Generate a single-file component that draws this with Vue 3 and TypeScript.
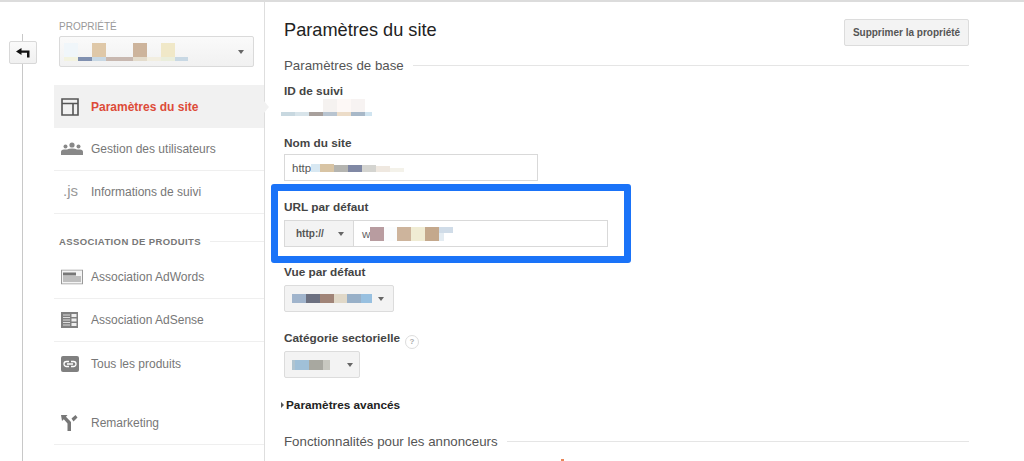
<script setup lang="ts">
type Block = [number, number, number, number, string]

const propertyBlocks: Block[] = [
  [0, 0, 14, 14, '#f0f6fa'], [0, 14, 14, 4, '#f3f3e0'], [14, 14, 14, 4, '#8090b0'],
  [28, 0, 14, 14, '#dfc8a8'], [28, 14, 14, 4, '#c8d8e4'], [42, 14, 27, 4, '#c8b8b0'],
  [69, 0, 14, 14, '#cdb49c'], [69, 14, 14, 4, '#e4dccc'], [83, 14, 14, 4, '#f2eee0'],
  [97, 0, 14, 14, '#f0e8c8'], [97, 14, 14, 4, '#eaeedc'], [111, 14, 13, 4, '#c8d8e4'],
]
const trackingBlocks: Block[] = [
  [42, 0, 14, 13, '#f5f2f0'], [56, 0, 14, 13, '#fdf8f6'], [70, 0, 14, 13, '#f7f3f2'],
  [0, 13, 14, 4, '#c8d8e0'], [14, 13, 14, 4, '#d8e4ea'], [28, 13, 14, 4, '#a8a09c'],
  [42, 13, 14, 4, '#b8c4d0'], [56, 13, 14, 4, '#ecdcc8'], [70, 13, 14, 4, '#a8b8c8'],
  [84, 13, 7, 4, '#d0e4f0'],
]
const nameBlocks: Block[] = [
  [0, 1, 9, 8, '#d8e8f2'], [9, 1, 14, 8, '#d8c4a4'], [23, 2, 14, 7, '#b4b4b0'],
  [37, 2, 14, 7, '#8088a4'], [51, 2, 14, 7, '#d4d4d0'], [65, 3, 14, 6, '#efe8e0'],
  [79, 5, 14, 4, '#f4f2ea'],
]
const urlBlocks: Block[] = [
  [0, 0, 14, 14, '#b89ca0'], [14, 0, 13, 14, '#fafcfd'], [27, 0, 14, 14, '#cdb49c'],
  [41, 0, 14, 14, '#f0ecd4'], [55, 0, 14, 14, '#c4a88c'], [69, 0, 14, 6, '#d0dce8'],
  [69, 6, 5, 8, '#e4ecf2'],
]
const viewBlocks: Block[] = [
  [0, 0, 14, 9, '#a0b4cc'], [14, 0, 14, 9, '#6c7080'], [28, 0, 14, 9, '#a08478'],
  [42, 0, 13, 9, '#e0d8c8'], [55, 0, 14, 9, '#98b0c8'], [69, 0, 11, 9, '#98c0e0'],
]
const categoryBlocks: Block[] = [
  [0, 0, 3, 10, '#b0c4d0'], [3, 0, 14, 10, '#a0c0d8'], [17, 0, 14, 10, '#a8a8a0'], [31, 0, 7, 10, '#c8c8c0'],
]
</script>

<template>
  <div class="page">
    <div class="rail">
      <button class="back" type="button" aria-label="Retour">
        <svg width="14" height="10" viewBox="0 0 14 10"><path d="M5.500 0 L0 3.500 L5.500 7 V4.700 H11 V9.500 H13.500 V2.500 H5.500 Z" fill="#111" /></svg>
      </button>
    </div>

    <aside class="sidebar">
      <div class="side-head">
        <div class="side-label">PROPRIÉTÉ</div>
        <div class="prop-select">
          <svg class="mosaic" width="124" height="18" viewBox="0 0 124 18">
            <rect v-for="(b, i) in propertyBlocks" :key="i" :x="b[0]" :y="b[1]" :width="b[2]" :height="b[3]" :fill="b[4]" />
          </svg>
          <span class="caret"></span>
        </div>
      </div>

      <nav class="nav-group">
        <a class="nav-item active">
          <svg class="nav-icon" width="18" height="18" viewBox="0 0 18 18"><path d="M1 1H17V17H1Z M1 5.500H17 M12 5.500V17" fill="none" stroke="#555" stroke-width="1.600" /></svg>
          <span>Paramètres du site</span>
        </a>
        <a class="nav-item">
          <svg class="nav-icon" width="22" height="14" viewBox="0 0 22 14"><circle cx="4.500" cy="4.500" r="2" fill="#888" /><circle cx="11" cy="3" r="2.600" fill="#888" /><circle cx="17.500" cy="4.500" r="2" fill="#888" /><path d="M0 13V10Q0 7.500 3 7.500H6Q7.500 6.500 11 6.500T16 7.500H19Q22 7.500 22 10V13Z" fill="#888" /></svg>
          <span>Gestion des utilisateurs</span>
        </a>
        <a class="nav-item">
          <span class="js-icon">.js</span>
          <span>Informations de suivi</span>
        </a>
      </nav>

      <div class="side-section">
        <span>ASSOCIATION DE PRODUITS</span>
        <i></i>
      </div>

      <nav class="nav-group">
        <a class="nav-item">
          <svg class="nav-icon" width="22" height="15" viewBox="0 0 22 15"><rect x="0.500" y="0.500" width="21" height="14" fill="#f4f4f4" stroke="#999" /><rect x="2" y="3" width="13" height="3" fill="#777" /><path d="M2 7.500H20M2 9.500H20M2 11.500H20" stroke="#888" /></svg>
          <span>Association AdWords</span>
        </a>
        <a class="nav-item">
          <svg class="nav-icon" width="17" height="16" viewBox="0 0 17 16"><rect width="17" height="16" fill="#808080" /><path d="M2 3H9M2 5.500H9M2 8H9M2 10.500H9M2 13H9" stroke="#ddd" /><rect x="10.500" y="2" width="5" height="3" fill="#eee" /><rect x="10.500" y="6.500" width="5" height="3" fill="#eee" /><rect x="10.500" y="11" width="5" height="3" fill="#eee" /></svg>
          <span>Association AdSense</span>
        </a>
        <a class="nav-item plain">
          <svg class="nav-icon" width="18" height="16" viewBox="0 0 18 16"><rect width="18" height="16" rx="2" fill="#808080" /><path d="M8 5.500H5.500A2.500 2.500 0 0 0 5.500 10.500H8M10 5.500H12.500A2.500 2.500 0 0 1 12.500 10.500H10M6 8H12" fill="none" stroke="#fff" stroke-width="1.300" /></svg>
          <span>Tous les produits</span>
        </a>
      </nav>

      <nav class="nav-group remarketing">
        <a class="nav-item">
          <svg class="nav-icon" width="17" height="16" viewBox="0 0 17 16"><path d="M0 0H6.500L5 1.800L10 7V16H6.500V8.500L2.800 4.200L1 6Z M16.500 2.500L14.500 0L10.500 3.500L12.500 6.500Z" fill="#777" /></svg>
          <span>Remarketing</span>
        </a>
      </nav>
    </aside>

    <main class="main">
      <header class="title-row">
        <h1>Paramètres du site</h1>
        <button class="delete" type="button">Supprimer la propriété</button>
      </header>

      <div class="section-head">
        <span>Paramètres de base</span>
        <i></i>
      </div>

      <div class="field tracking">
        <label>ID de suivi</label>
        <svg class="tracking-value" width="91" height="17" viewBox="0 0 91 17">
          <rect v-for="(b, i) in trackingBlocks" :key="i" :x="b[0]" :y="b[1]" :width="b[2]" :height="b[3]" :fill="b[4]" />
        </svg>
      </div>

      <div class="field name">
        <label>Nom du site</label>
        <div class="text-input">
          <span>http</span>
          <svg width="93" height="10" viewBox="0 0 93 10">
            <rect v-for="(b, i) in nameBlocks" :key="i" :x="b[0]" :y="b[1]" :width="b[2]" :height="b[3]" :fill="b[4]" />
          </svg>
        </div>
      </div>

      <div class="highlight">
        <label>URL par défaut</label>
        <div class="url-input">
          <div class="scheme"><span>http://</span><span class="caret"></span></div>
          <div class="url-value">
            <span>w</span>
            <svg width="83" height="14" viewBox="0 0 83 14">
              <rect v-for="(b, i) in urlBlocks" :key="i" :x="b[0]" :y="b[1]" :width="b[2]" :height="b[3]" :fill="b[4]" />
            </svg>
          </div>
        </div>
      </div>

      <div class="field view">
        <label>Vue par défaut</label>
        <div class="select view-select">
          <svg width="80" height="9" viewBox="0 0 80 9">
            <rect v-for="(b, i) in viewBlocks" :key="i" :x="b[0]" :y="b[1]" :width="b[2]" :height="b[3]" :fill="b[4]" />
          </svg>
          <span class="caret"></span>
        </div>
      </div>

      <div class="field category">
        <label>Catégorie sectorielle<span class="help">?</span></label>
        <div class="select category-select">
          <svg width="38" height="10" viewBox="0 0 38 10">
            <rect v-for="(b, i) in categoryBlocks" :key="i" :x="b[0]" :y="b[1]" :width="b[2]" :height="b[3]" :fill="b[4]" />
          </svg>
          <span class="caret"></span>
        </div>
      </div>

      <div class="advanced"><span class="tri"></span>Paramètres avancés</div>

      <div class="section-head ads">
        <span>Fonctionnalités pour les annonceurs</span>
        <i></i>
      </div>
      <span class="red-mark"></span>
    </main>
  </div>
</template>

<style>
html, body { margin: 0; background: #fff; overflow: hidden; }
</style>

<style scoped>
.page {
  display: grid;
  grid-template-columns: 54px 211px 1fr;
  height: 461px;
  box-sizing: border-box;
  border-top: 2px solid #dcdcdc;
  font-family: "Liberation Sans", Arial, sans-serif;
  overflow: hidden;
}
.rail { position: relative; padding: 39px 0 0 9px; }
.rail::before {
  content: "";
  position: absolute;
  left: 22px;
  top: 32px;
  bottom: 0;
  width: 1px;
  background: #c8c8c8;
}
.back {
  position: relative;
  display: flex;
  align-items: center;
  justify-content: center;
  width: 28px;
  height: 23px;
  padding: 0;
  background: linear-gradient(#fafafa, #f0f0f0);
  border: 1px solid #d8d8d8;
  border-radius: 2px;
}
.sidebar { border-right: 1px solid #dedede; }
.side-head { padding: 19px 10px 0 5px; height: 83px; box-sizing: border-box; }
.side-label { font-size: 10px; color: #999; line-height: 12px; margin-bottom: 3px; }
.prop-select {
  display: flex;
  align-items: center;
  justify-content: space-between;
  height: 31px;
  box-sizing: border-box;
  padding: 0 9px 0 4px;
  background: linear-gradient(#fafafa, #f1f1f1);
  border: 1px solid #dadada;
  border-radius: 2px;
}
.caret {
  display: block;
  width: 0;
  height: 0;
  border-left: 3.500px solid transparent;
  border-right: 3.500px solid transparent;
  border-top: 4px solid #666;
}
.nav-group { display: flex; flex-direction: column; }
.nav-item {
  position: relative;
  display: flex;
  align-items: center;
  height: 43px;
  box-sizing: border-box;
  padding-left: 37px;
  font-size: 12px;
  color: #777;
  border-bottom: 1px solid #efefef;
}
.nav-item.plain { border-bottom: none; }
.nav-item.active {
  background: #f1f1f1;
  color: #dd4b39;
  font-weight: bold;
  border-bottom: none;
}
.nav-item.active::after {
  content: "";
  position: absolute;
  right: -5px;
  top: 16px;
  width: 0;
  height: 0;
  border-top: 6px solid transparent;
  border-bottom: 6px solid transparent;
  border-left: 5px solid #f1f1f1;
}
.nav-icon { position: absolute; left: 7px; top: 50%; transform: translateY(-50%); }
.js-icon { position: absolute; left: 9px; top: 10px; font-size: 15px; color: #999; line-height: 20px; }
.side-section {
  display: flex;
  align-items: center;
  gap: 9px;
  height: 42px;
  box-sizing: border-box;
  padding: 13px 0 1px 5px;
  font-size: 9.500px;
  font-weight: bold;
  color: #777;
  letter-spacing: 0.400px;
  white-space: nowrap;
}
.side-section i { flex: 1; height: 1px; background: #eee; }
.remarketing { margin-top: 17px; }

.main { position: relative; padding: 0 55px 0 19px; }
.title-row { display: flex; justify-content: space-between; height: 48px; }
h1 { margin: 17px 0 0; font-size: 18.200px; font-weight: normal; color: #222; line-height: 22px; }
.delete {
  margin-top: 17px;
  width: 125px;
  height: 27px;
  padding: 0;
  font: bold 10px "Liberation Sans", Arial, sans-serif;
  color: #555;
  background: #f3f3f3;
  border: 1px solid #dcdcdc;
  border-radius: 2px;
}
.section-head {
  display: flex;
  align-items: center;
  gap: 9px;
  height: 30px;
  font-size: 13.300px;
  color: #555;
  white-space: nowrap;
}
.section-head i { flex: 1; height: 1px; background: #e5e5e5; }
label { display: block; font-size: 11.800px; font-weight: bold; color: #444; line-height: 14px; }
.tracking { margin-top: 4px; height: 52px; }
.tracking label { margin-bottom: 1px; }
.tracking-value { display: block; margin-left: -3px; }
.name label { margin-bottom: 4px; }
.text-input {
  display: flex;
  align-items: center;
  width: 254px;
  height: 27px;
  box-sizing: border-box;
  padding-left: 7px;
  border: 1px solid #d9d9d9;
  font-size: 11.500px;
  color: #555;
}
.highlight {
  width: 360px;
  height: 79px;
  box-sizing: border-box;
  margin: 3px 0 0 -13px;
  padding: 9px 0 0 6px;
  border: 7px solid #1a73f8;
  border-radius: 3px;
}
.highlight label { margin-bottom: 6px; }
.url-input {
  display: flex;
  width: 324px;
  height: 27px;
  box-sizing: border-box;
  border: 1px solid #d9d9d9;
}
.scheme {
  display: flex;
  align-items: center;
  justify-content: space-between;
  width: 69px;
  box-sizing: border-box;
  padding: 0 9px 0 11px;
  background: #f3f3f3;
  border-right: 1px solid #d9d9d9;
  font-size: 10px;
  font-weight: bold;
  color: #555;
}
.url-value {
  display: flex;
  align-items: center;
  padding-left: 8px;
  font-size: 11.500px;
  color: #666;
}
.view { margin-top: 2px; }
.view label { margin-bottom: 6px; }
.category label { margin-bottom: 2px; }
.select {
  display: flex;
  align-items: center;
  justify-content: space-between;
  height: 27px;
  box-sizing: border-box;
  padding: 0 9px 0 7px;
  background: #f3f3f3;
  border: 1px solid #dcdcdc;
  border-radius: 2px;
}
.view-select { width: 110px; }
.category-select { width: 76px; padding-right: 6px; }
.category { margin-top: 19px; }
.help {
  display: inline-block;
  width: 12px;
  height: 12px;
  margin-left: 5px;
  border: 1px solid #ddd;
  border-radius: 50%;
  font-size: 8px;
  line-height: 12px;
  text-align: center;
  color: #aaa;
  vertical-align: -2px;
}
.advanced {
  position: relative;
  margin-top: 20px;
  padding-left: 2px;
  font-size: 11.800px;
  font-weight: bold;
  color: #222;
  line-height: 14px;
}
.tri {
  position: absolute;
  left: -3px;
  top: 4px;
  width: 0;
  height: 0;
  border-top: 3px solid transparent;
  border-bottom: 3px solid transparent;
  border-left: 3px solid #555;
}
.ads { margin-top: 14px; }
.red-mark {
  position: absolute;
  left: 296px;
  top: 457px;
  width: 3px;
  height: 2px;
  background: #e9865a;
}
</style>
